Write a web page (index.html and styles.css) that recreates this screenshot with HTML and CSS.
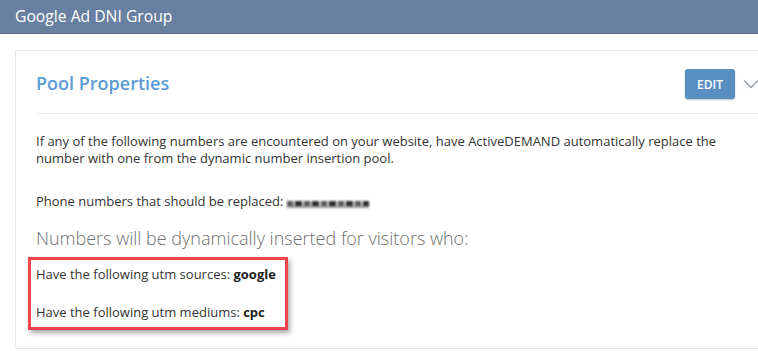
FILE: index.html
```html
<!DOCTYPE html>
<html>
<head>
<meta charset="utf-8">
<link rel="stylesheet" href="styles.css">
</head>
<body>
<header class="topbar">Google Ad DNI Group</header>
<main class="main">
  <section class="card">
    <div class="card-head">
      <h2 class="card-title">Pool Properties</h2>
      <div class="actions">
        <button class="btn-edit">EDIT</button>
        <svg class="chevron" width="16" height="10" viewBox="0 0 16 10"><polyline points="1,1.5 8,8.5 15,1.5" fill="none" stroke="#9aa0a6" stroke-width="1.4"/></svg>
      </div>
    </div>
    <div class="card-body">
      <p class="para">If any of the following numbers are encountered on your website, have ActiveDEMAND automatically replace the number with one from the dynamic number insertion pool.</p>
      <p class="para phones">Phone numbers that should be replaced:<span class="redacted"></span></p>
      <h3 class="subhead">Numbers will be dynamically inserted for visitors who:</h3>
      <div class="highlight">
        <p class="cond">Have the following utm sources: <b>google</b></p>
        <p class="cond second">Have the following utm mediums: <b>cpc</b></p>
      </div>
    </div>
  </section>
</main>
</body>
</html>
```
FILE: styles.css
```css
html, body { margin: 0; padding: 0; }
body {
  width: 758px;
  height: 351px;
  overflow: hidden;
  background: #ffffff;
  font-family: "Open Sans", "Liberation Sans", sans-serif;
  color: #333333;
}
.topbar {
  height: 33px;
  line-height: 32px;
  background: #67809f;
  border-bottom: 1px solid #5b7393;
  color: #ffffff;
  font-size: 15.7px;
  padding-left: 15px;
}
.main {
  padding: 16px 0 0 15px;
}
.card {
  width: 738px;
  border: 1px solid #e4e9ef;
  background: #fff;
  padding: 0 0 18px 21px;
}
.card-head {
  display: flex;
  align-items: center;
  justify-content: space-between;
  height: 61px;
  border-bottom: 1px solid #e8eaed;
  padding-top: 1px;
}
.card-title {
  margin: 0 0 0 -1px;
  font-size: 18px;
  font-weight: 600;
  color: #5a9bd6;
}
.actions {
  display: flex;
  align-items: center;
  gap: 8px;
  padding-right: 16px;
  margin-top: 3px;
}
.btn-edit {
  width: 50px;
  height: 30px;
  border: none;
  border-radius: 3px;
  background: #5a8fc1;
  color: #ffffff;
  font-family: "Open Sans", "Liberation Sans", sans-serif;
  font-size: 12px;
  font-weight: 600;
  box-shadow: 0 1px 2px rgba(0,0,0,0.25);
  padding: 0;
}
.chevron { display: block; }
.card-body {
  padding-top: 19px;
}
.para {
  margin: 0 0 0 -1px;
  width: 700px;
  font-size: 13px;
  line-height: 17px;
  color: #333;
}
.phones {
  margin-top: 26px;
}
.redacted {
  display: inline-block;
  width: 82px;
  height: 5px;
  margin-left: 4px;
  vertical-align: -2px;
  border-bottom: 2px solid #9a9a9a;
  background: repeating-linear-gradient(90deg, #555 0 6px, #d8d8d8 6px 8px, #2a2a2a 8px 15px, #e0e0e0 15px 17px);
  filter: blur(0.8px);
}
.subhead {
  margin: 16px 0 0 -1px;
  font-size: 18px;
  font-weight: 300;
  line-height: 24px;
  color: #707070;
}
.highlight {
  margin: 7px 0 0 -9px;
  width: 249px;
  border: 3px solid #f2434a;
  padding: 6px 0 6px 5px;
  box-shadow: 2px 3px 5px rgba(0,0,0,0.35);
}
.cond {
  margin: 0;
  font-size: 13px;
  line-height: 17px;
}
.cond b { font-weight: 700; color: #222; }
.second { margin-top: 21px; }
```
